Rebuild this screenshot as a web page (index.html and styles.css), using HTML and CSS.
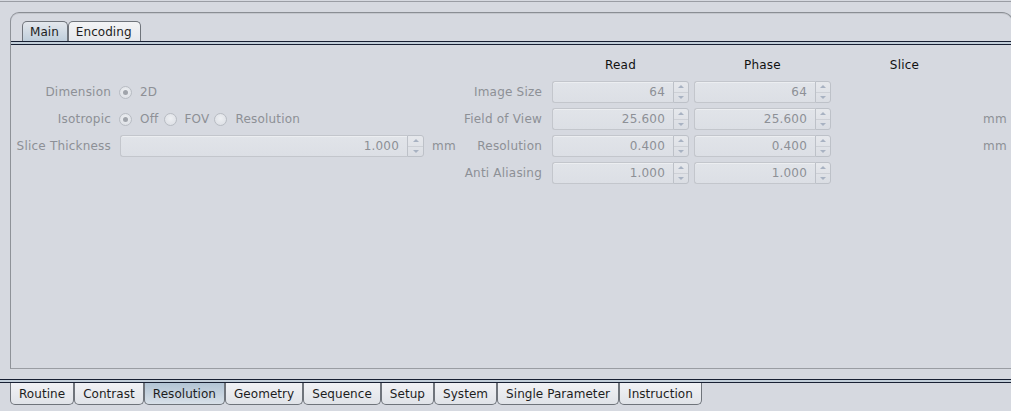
FILE: index.html
```html
<!DOCTYPE html>
<html>
<head>
<meta charset="utf-8">
<link rel="stylesheet" href="styles.css">
</head>
<body>
<div class="topline"></div>
<div class="panel">
  <div class="tabs top-tabs">
    <div class="tab sel">Main</div>
    <div class="tab">Encoding</div>
  </div>
  <div class="dline"></div>
  <div class="content">
    <div class="grid-left">
      <div class="hdr"></div><div class="hdr"></div><div class="hdr"></div>
      <div class="lbl">Dimension</div>
      <div class="radios">
        <span class="radio on"></span><span class="rtext">2D</span>
      </div>
      <div></div>
      <div class="lbl">Isotropic</div>
      <div class="radios">
        <span class="radio on"></span><span class="rtext">Off</span>
        <span class="radio"></span><span class="rtext">FOV</span>
        <span class="radio"></span><span class="rtext">Resolution</span>
      </div>
      <div></div>
      <div class="lbl">Slice Thickness</div>
      <div class="spin wide"><div class="field">1.000</div><div class="btn"><i class="up"></i><i class="dn"></i></div></div>
      <div class="unit">mm</div>
    </div>
    <div class="grid-right">
      <div></div><div class="hdr">Read</div><div class="hdr">Phase</div><div class="hdr">Slice</div><div></div>

      <div class="lbl">Image Size</div>
      <div class="spin"><div class="field">64</div><div class="btn"><i class="up"></i><i class="dn"></i></div></div>
      <div class="spin"><div class="field">64</div><div class="btn"><i class="up"></i><i class="dn"></i></div></div>
      <div></div><div></div>

      <div class="lbl">Field of View</div>
      <div class="spin"><div class="field">25.600</div><div class="btn"><i class="up"></i><i class="dn"></i></div></div>
      <div class="spin"><div class="field">25.600</div><div class="btn"><i class="up"></i><i class="dn"></i></div></div>
      <div></div><div class="unit r">mm</div>

      <div class="lbl">Resolution</div>
      <div class="spin"><div class="field">0.400</div><div class="btn"><i class="up"></i><i class="dn"></i></div></div>
      <div class="spin"><div class="field">0.400</div><div class="btn"><i class="up"></i><i class="dn"></i></div></div>
      <div></div><div class="unit r">mm</div>

      <div class="lbl">Anti Aliasing</div>
      <div class="spin"><div class="field">1.000</div><div class="btn"><i class="up"></i><i class="dn"></i></div></div>
      <div class="spin"><div class="field">1.000</div><div class="btn"><i class="up"></i><i class="dn"></i></div></div>
      <div></div><div></div>
    </div>
  </div>
</div>
<div class="bottom">
  <div class="dline full"></div>
  <div class="tabs bot-tabs">
    <div class="tab">Routine</div>
    <div class="tab">Contrast</div>
    <div class="tab sel">Resolution</div>
    <div class="tab">Geometry</div>
    <div class="tab">Sequence</div>
    <div class="tab">Setup</div>
    <div class="tab">System</div>
    <div class="tab">Single Parameter</div>
    <div class="tab">Instruction</div>
  </div>
  <div class="corner"></div>
</div>
</body>
</html>
```
FILE: styles.css
```css
* { box-sizing: border-box; }
html, body { margin: 0; padding: 0; }
body {
  width: 1011px;
  height: 411px;
  overflow: hidden;
  background: #d6d9e0;
  font-family: "DejaVu Sans", sans-serif;
  font-size: 12px;
  letter-spacing: 0.2px;
  color: #1e1e1e;
  position: relative;
}
.topline {
  margin-top: 1px;
  height: 1px;
  background: #9a9da4;
}
.panel {
  margin: 10px 0 0 10px;
  width: 1004px;
  height: 357px;
  border: 1px solid #8e9298;
  border-top-color: #8a8e94;
  border-bottom-color: #9a9da3;
  border-radius: 9px 12px 0 0;
  box-shadow: inset 0 1px 0 #c4c7cd;
  padding-top: 8px;
}
.tabs { display: flex; }
.top-tabs { margin-left: 11px; height: 20px; }
.tab {
  padding: 0 8px 0 7px;
  line-height: 19px;
  white-space: nowrap;
  letter-spacing: 0.05px;
  border: 1px solid #6f747b;
  color: #1d1d1d;
  background: linear-gradient(#f3f4f6, #e6e8ec);
}
.top-tabs .tab {
  border-bottom: none;
  border-radius: 5px 5px 0 0;
  height: 20px;
  padding-top: 1px;
}
.top-tabs .tab.sel {
  background: linear-gradient(#e4e8ed, #bfcedb);
}
.dline {
  height: 4px;
  border-top: 1px solid #182033;
  border-bottom: 1px solid #182033;
  background: #c2ced9;
}
.content {
  display: flex;
  padding-top: 9px;
}
.grid-left {
  display: grid;
  grid-template-columns: 100px 305px 21px;
  grid-template-rows: repeat(4, 22px);
  column-gap: 8px;
  row-gap: 5px;
}
.grid-right {
  margin-left: 7px;
  display: grid;
  grid-template-columns: 87px 137px 137px 137px 40px;
  grid-template-rows: repeat(5, 22px);
  column-gap: 5px;
  row-gap: 5px;
}
.hdr {
  display: flex;
  align-items: center;
  justify-content: center;
  color: #111;
}
.lbl {
  display: flex;
  align-items: center;
  justify-content: flex-end;
  color: #8d9096;
  white-space: nowrap;
}
.grid-right .lbl { padding-right: 5px; }
.unit {
  display: flex;
  align-items: center;
  color: #8d9096;
}
.unit.r { padding-left: 5px; }
.radios {
  display: flex;
  align-items: center;
}
.radio {
  width: 13px;
  height: 13px;
  border-radius: 50%;
  border: 1px solid #b8bcc3;
  background: radial-gradient(circle at 50% 40%, #eef0f3, #d9dce2);
  display: inline-flex;
  align-items: center;
  justify-content: center;
  margin-right: 8px;
}
.radio.on::after {
  content: "";
  width: 5px;
  height: 5px;
  border-radius: 50%;
  background: #a0a4ab;
}
.rtext {
  color: #8d9096;
  margin-right: 5px;
}
.spin {
  display: flex;
  height: 22px;
}
.spin.wide { margin-left: 1px; }
.field {
  flex: 1;
  border: 1px solid #c3c6cc;
  border-right: none;
  border-radius: 3px 0 0 3px;
  background: linear-gradient(#e1e4e9, #dcdfe5);
  color: #8d9096;
  text-align: right;
  padding-right: 8px;
  line-height: 20px;
  box-shadow: inset 0 1px 0 #eceef1;
}
.btn {
  width: 16px;
  border: 1px solid #bdc1c8;
  border-radius: 0 3px 3px 0;
  background: linear-gradient(#e6e8ec, #dadde3);
  display: flex;
  flex-direction: column;
}
.spin.wide .btn { width: 17px; }
.btn i {
  flex: 1;
  display: flex;
  align-items: center;
  justify-content: center;
}
.btn i.up { border-bottom: 1px solid #cdd0d6; }
.btn i.up::after {
  content: "";
  border-left: 3px solid transparent;
  border-right: 3px solid transparent;
  border-bottom: 3px solid #a8b2c2;
}
.btn i.dn::after {
  content: "";
  border-left: 3px solid transparent;
  border-right: 3px solid transparent;
  border-top: 3px solid #a8b2c2;
}
.bottom {
  margin-top: 10px;
}
.dline.full { width: 1011px; }
.bot-tabs { margin-left: 10px; height: 22px; }
.bot-tabs .tab {
  border-top: none;
  border-radius: 0 0 5px 5px;
  height: 22px;
  line-height: 19px;
  padding: 2px 8px 0;
  background: linear-gradient(#f1f2f5, #e0e3e8);
}
.bot-tabs .tab.sel {
  background: linear-gradient(#b2c4d4, #d8e0e8);
}
.corner {
  position: absolute;
  left: -6px;
  top: 398px;
  width: 12px;
  height: 20px;
  border-left: 1px solid #b0b3b9;
  border-bottom: 1px solid #b0b3b9;
  border-radius: 0 0 0 8px;
}
```
